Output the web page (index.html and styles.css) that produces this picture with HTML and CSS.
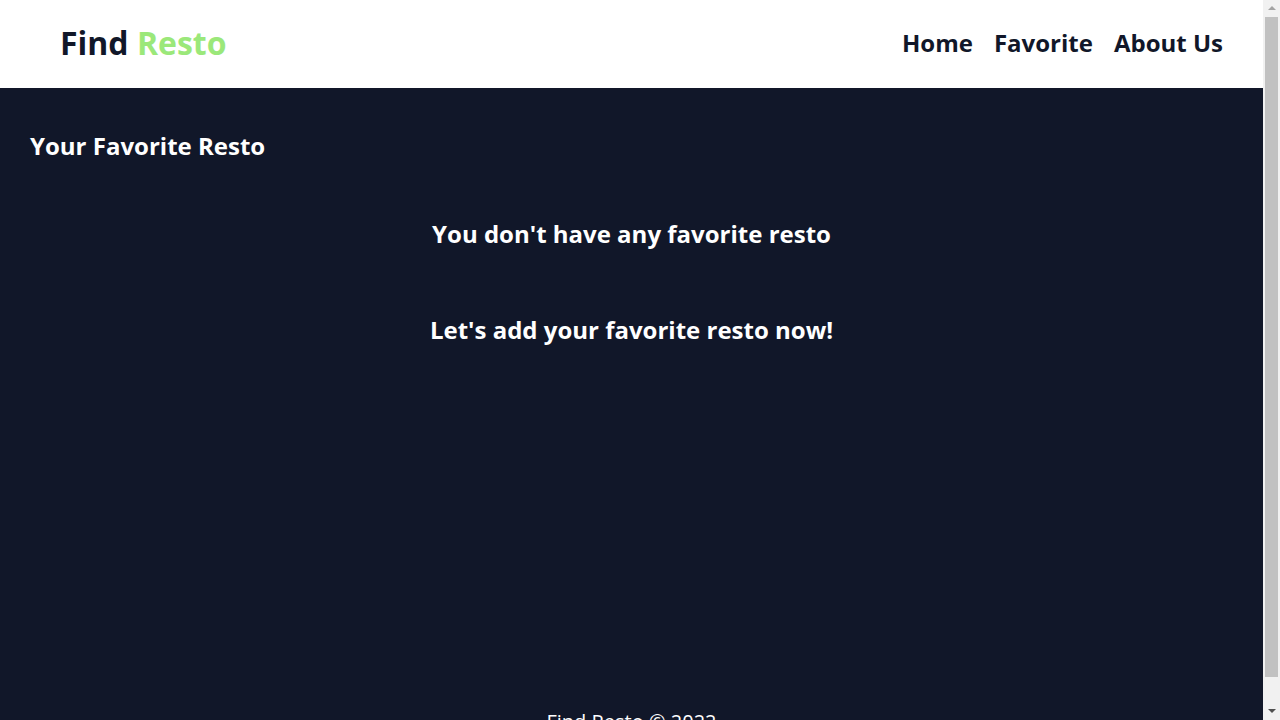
FILE: index.html
```html
<!DOCTYPE html>
<html lang="en">
<head>
<meta charset="utf-8">
<title>Find Resto</title>
<link rel="stylesheet" href="styles.css">
</head>
<body>
<header class="app-bar">
  <h1 class="logo">Find <span class="logo-accent">Resto</span></h1>
  <nav class="nav">
    <a class="nav-link" href="#">Home</a>
    <a class="nav-link" href="#">Favorite</a>
    <a class="nav-link" href="#">About Us</a>
  </nav>
</header>
<main class="content">
  <h2 class="section-title">Your Favorite Resto</h2>
  <div class="empty">
    <h3 class="empty-text">You don't have any favorite resto</h3>
    <h3 class="empty-text">Let's add your favorite resto now!</h3>
  </div>
</main>
<footer class="footer">
  <p class="footer-text">Find Resto © 2022</p>
</footer>
<div class="scrollbar" aria-hidden="true">
  <span class="sb-arrow sb-up"></span>
  <span class="sb-thumb"></span>
  <span class="sb-arrow sb-down"></span>
</div>
</body>
</html>
```
FILE: styles.css
```css
* { box-sizing: border-box; }
html, body { margin: 0; padding: 0; }
body {
  font-family: "Open Sans", "Noto Sans", sans-serif;
  background: #111729;
  color: #ffffff;
  padding-right: 17px;
}
.app-bar {
  height: 88px;
  background: #ffffff;
  display: flex;
  align-items: center;
  justify-content: space-between;
  padding: 0 40px 4px 60px;
}
.logo {
  margin: 0;
  font-size: 32px;
  font-weight: 700;
  color: #111729;
}
.logo-accent { color: #9be87a; }
.nav {
  display: flex;
  gap: 21px;
}
.nav-link {
  font-size: 24px;
  font-weight: 700;
  color: #111729;
  text-decoration: none;
}
.content {
  padding: 40px 30px 0;
  min-height: 600px;
}
.section-title {
  margin: 0;
  font-size: 24px;
  font-weight: 700;
  line-height: 36px;
}
.empty {
  display: flex;
  flex-direction: column;
  align-items: center;
  gap: 60px;
  margin-top: 52px;
}
.empty-text {
  margin: 0;
  font-size: 24px;
  font-weight: 700;
  line-height: 36px;
}
.footer {
  height: 62px;
  padding-top: 21px;
  text-align: center;
}
.footer-text {
  margin: 0;
  font-size: 20px;
  line-height: 26px;
}
.scrollbar {
  position: fixed;
  top: 0;
  right: 0;
  width: 17px;
  height: 100vh;
  background: #f1f1f1;
  display: flex;
  flex-direction: column;
  align-items: center;
}
.sb-arrow {
  width: 0;
  height: 0;
  border-left: 4px solid transparent;
  border-right: 4px solid transparent;
  flex: none;
}
.sb-up {
  border-bottom: 4px solid #a3a3a3;
  margin: 6px 0 7px;
}
.sb-down {
  border-top: 4px solid #505050;
  margin: 6px 0 7px;
}
.sb-thumb {
  flex: 1;
  width: 13px;
  background: #c1c1c1;
  margin-bottom: 26px;
}
```
